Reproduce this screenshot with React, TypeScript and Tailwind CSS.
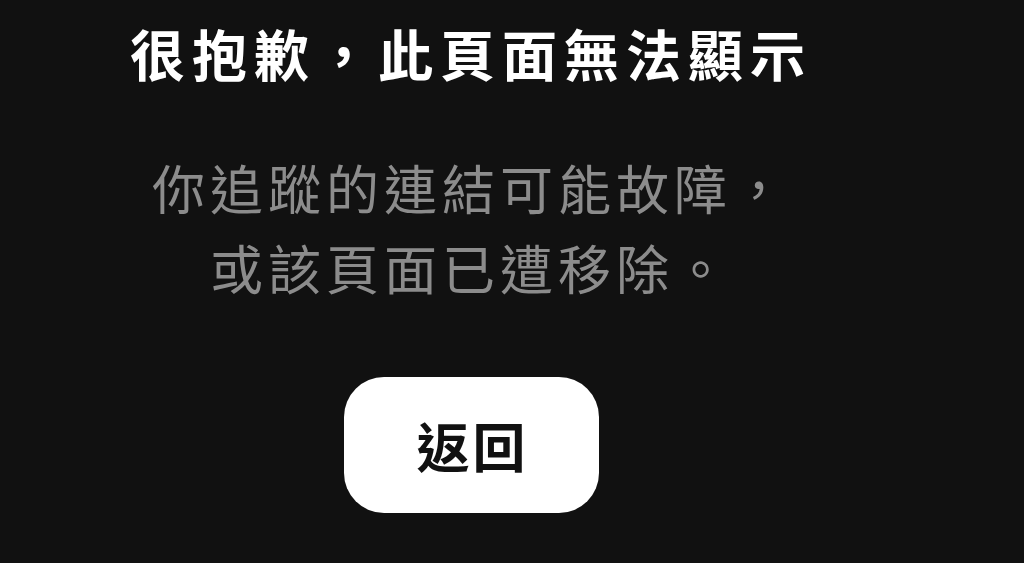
import React from 'react';

const App: React.FC = () => {
  return (
    <div
      className="w-[1024px] h-[563px] overflow-hidden bg-[#111111] flex flex-col items-center pr-[82px] pt-[20px]"
      style={{ fontFamily: '"Noto Sans CJK TC", "Noto Sans CJK SC", sans-serif' }}
    >
      <h1 className="text-[55px] leading-[64px] font-bold text-white tracking-[7px] whitespace-nowrap">
        很抱歉，此頁面無法顯示
      </h1>
      <p className="mt-[63px] text-[53px] leading-[80px] text-[#8c8c8c] tracking-[5px] text-center whitespace-nowrap">
        你追蹤的連結可能故障，
        <br />
        或該頁面已遭移除。
      </p>
      <button className="mt-[70px] w-[255px] h-[136px] rounded-[40px] bg-white flex items-center justify-center">
        <span className="text-[53px] leading-none font-bold text-[#111111] tracking-[3px] pl-[3px]">返回</span>
      </button>
    </div>
  );
};

export default App;
